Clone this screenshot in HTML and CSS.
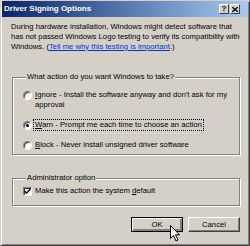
FILE: index.html
```html
<!DOCTYPE html>
<html>
  <head>
    <title>Driver Signing Options</title>
    <meta charset="UTF-8" />
    <link rel="stylesheet" href="styles.css">
  </head>
  <body>
    <div class="window">
      <div class="titlebar">
        <span class="title">Driver Signing Options</span>
        <div class="caption">
          <span class="cap-btn">?</span>
          <span class="cap-btn">
            <svg width="6" height="5" viewBox="0 0 6 5"><path d="M0 0L6 5M6 0L0 5" stroke="#000" stroke-width="1.3"/></svg>
          </span>
        </div>
      </div>
      <div class="body">
        <p class="intro">During hardware installation, Windows might detect software that<br>has not passed Windows Logo testing to verify its compatibility with<br>Windows. (<a href="#">Tell me why this testing is important</a>.)</p>

        <fieldset class="group actions">
          <legend>What action do you want Windows to take?</legend>
          <div class="option">
            <span class="radio"></span>
            <span class="label"><u>I</u>gnore - Install the software anyway and don't ask for my<br>approval</span>
          </div>
          <div class="option">
            <span class="radio checked"></span>
            <span class="label focused"><u>W</u>arn - Prompt me each time to choose an action</span>
          </div>
          <div class="option">
            <span class="radio"></span>
            <span class="label"><u>B</u>lock - Never install unsigned driver software</span>
          </div>
        </fieldset>

        <fieldset class="group admin">
          <legend>Administrator option</legend>
          <div class="option">
            <span class="check">
              <svg width="7" height="7" viewBox="0 0 7 7"><path d="M0.5 3L2.5 5.2L6.5 0.8" stroke="#000" stroke-width="1.4" fill="none"/></svg>
            </span>
            <span class="label">Make this action the system <u>d</u>efault</span>
          </div>
        </fieldset>

        <div class="buttons">
          <button class="btn default">OK</button>
          <button class="btn">Cancel</button>
        </div>
      </div>
      <!-- mouse pointer -->
      <svg class="pointer" width="10" height="17" viewBox="0 0 10 17">
        <path d="M0.5 0.5V13.5L3.5 10.5L6 16L8 15L5.5 9.8H9.5Z" fill="#fff" stroke="#000" stroke-width="1"/>
      </svg>
    </div>
  </body>
</html>
```

FILE: styles.css
```css
html {
  height: 100%;
  overflow: hidden;
}
body {
  margin: 0;
  font-family: "Liberation Sans", Arial, sans-serif;
  font-size: 7.7px;
  line-height: 10px;
  color: #000;
  background: #d4d0c8;
}
.window {
  position: relative;
  width: 250px;
  height: 246px;
  box-sizing: border-box;
  background: #d4d0c8;
  border: 1px solid;
  border-color: #d4d0c8 #404040 #404040 #d4d0c8;
  box-shadow: inset 1px 1px 0 #fff, inset -1px -1px 0 #808080;
}
.titlebar {
  height: 16px;
  margin: 0 1px;
  display: flex;
  align-items: center;
  justify-content: space-between;
  background: linear-gradient(to right, #0a246a, #a6caf0);
}
.title {
  color: #fff;
  font-weight: bold;
  font-size: 8px;
  padding-left: 2px;
}
.caption {
  display: flex;
  gap: 1px;
  padding-right: 8px;
}
.cap-btn {
  width: 8px;
  height: 8px;
  display: flex;
  align-items: center;
  justify-content: center;
  background: #d4d0c8;
  font-weight: bold;
  font-size: 8px;
  border: 1px solid;
  border-color: #fff #404040 #404040 #fff;
}
.body {
  padding: 5px 9px 0 10px;
}
.intro {
  margin: 0;
}
.intro a {
  color: #0033cc;
}
.group {
  margin: 20px 0 0 1px;
  padding: 8px 0 4px 10px;
  min-inline-size: 0;
  border: 1px solid #808080;
  box-shadow: 1px 1px 0 #fff, inset 1px 1px 0 #fff;
}
.group legend {
  padding: 0 1px;
  margin-left: 3px;
  background: #d4d0c8;
}
.actions {
  display: flex;
  flex-direction: column;
  gap: 10px;
}
.admin {
  margin-top: 18px;
  padding: 3px 0 9px 10px;
}
.option {
  display: flex;
  align-items: flex-start;
  gap: 3px;
}
.radio {
  width: 9px;
  height: 9px;
  margin-top: 1px;
  box-sizing: border-box;
  border-radius: 50%;
  border: 1px solid;
  border-color: #808080 #fff #fff #808080;
  background: #fff;
  box-shadow: inset 1px 1px 0 #404040;
  position: relative;
}
.radio.checked::after {
  content: "";
  position: absolute;
  top: 2px;
  left: 2px;
  width: 3px;
  height: 3px;
  border-radius: 50%;
  background: #000;
}
.label.focused {
  outline: 1px dotted #000;
  outline-offset: 0;
  padding: 0 1px;
  margin-left: -1px;
}
.check {
  width: 9px;
  height: 9px;
  margin-top: 1px;
  box-sizing: border-box;
  display: flex;
  align-items: center;
  justify-content: center;
  background: #fff;
  border: 1px solid;
  border-color: #808080 #fff #fff #808080;
  box-shadow: inset 1px 1px 0 #404040;
}
.buttons {
  display: flex;
  justify-content: flex-end;
  gap: 5px;
  margin-top: 11px;
}
.btn {
  width: 52px;
  height: 15px;
  padding: 0;
  font-family: inherit;
  font-size: 7.7px;
  background: #d4d0c8;
  border: 1px solid;
  border-color: #fff #404040 #404040 #fff;
  box-shadow: inset -1px -1px 0 #808080;
}
.btn.default {
  border: 1px solid #000;
  box-shadow: inset 1px 1px 0 #fff, inset -2px -2px 0 #808080;
}
.pointer {
  position: absolute;
  left: 169px;
  top: 224px;
}
```
